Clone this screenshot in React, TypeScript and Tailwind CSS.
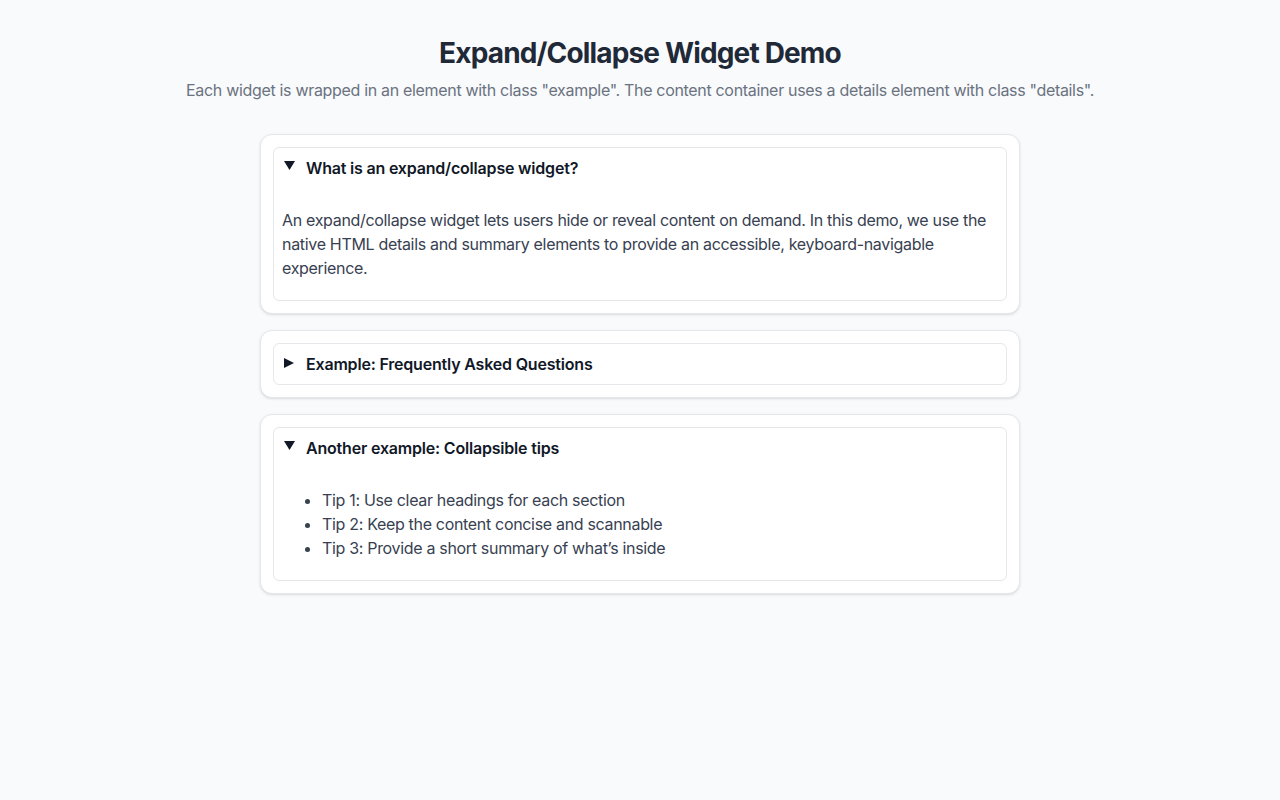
import { useState } from "react";

type Props = {
  title: string;
  defaultOpen?: boolean;
  children: React.ReactNode;
};

function Example({ title, defaultOpen = false, children }: Props) {
  const [open, setOpen] = useState(defaultOpen);

  return (
    <section className="example rounded-xl border border-[#e5e7eb] bg-white p-3 shadow-sm">
      <details
        className="details rounded-md border border-[#e5e7eb]"
        open={open}
        onToggle={(e) => setOpen((e.currentTarget as HTMLDetailsElement).open)}
      >
        <summary className="flex cursor-pointer list-none items-start px-2 py-2 text-base leading-6 font-semibold tracking-[-0.012em] text-[#111827] [&::-webkit-details-marker]:hidden">
          {open ? (
            <svg className="mt-[5px] ml-0.5 shrink-0" width="11" height="9" viewBox="0 0 11 9">
              <path d="M0 0 H11 L5.5 9 Z" fill="#111827" />
            </svg>
          ) : (
            <svg className="mt-[6px] ml-0.5 shrink-0" width="10" height="10" viewBox="0 0 10 10">
              <path d="M0 0 L10 5 L0 10 Z" fill="#111827" />
            </svg>
          )}
          <span className={open ? "ml-[11px]" : "ml-3"}>{title}</span>
        </summary>
        <div className="px-2 pt-2 pb-2">{children}</div>
      </details>
    </section>
  );
}

export default function App() {
  return (
    <div
      className="min-h-screen bg-[#f8fafc] px-4 pt-9 pb-10 tracking-[-0.02em] text-[#374151]"
      style={{ fontFamily: "Inter, 'Noto Sans', sans-serif" }}
    >
      <header className="text-center">
        <h1 className="text-[28px] leading-[34px] font-bold tracking-[-0.03em] text-[#1f2937]">
          Expand/Collapse Widget Demo
        </h1>
        <p className="mt-2 text-base leading-6 text-[#6b7280]">
          Each widget is wrapped in an element with class "example". The content container uses a details element with class "details".
        </p>
      </header>

      <main className="mx-auto mt-8 flex w-[760px] flex-col gap-4">
        <Example title="What is an expand/collapse widget?" defaultOpen>
          <p className="my-3 text-base leading-6">
            An expand/collapse widget lets users hide or reveal content on demand. In this demo, we use the native HTML details and summary elements to provide an accessible, keyboard-navigable experience.
          </p>
        </Example>

        <Example title="Example: Frequently Asked Questions">
          <p className="my-3">Answers go here.</p>
        </Example>

        <Example title="Another example: Collapsible tips" defaultOpen>
          <ul className="my-3 list-disc pl-10 text-base leading-6">
            <li>Tip 1: Use clear headings for each section</li>
            <li>Tip 2: Keep the content concise and scannable</li>
            <li>Tip 3: Provide a short summary of what’s inside</li>
          </ul>
        </Example>
      </main>
    </div>
  );
}
